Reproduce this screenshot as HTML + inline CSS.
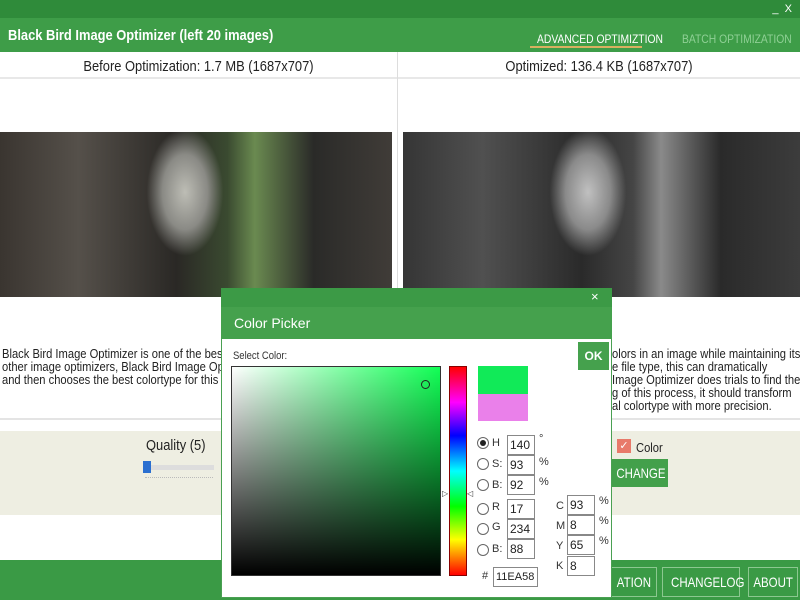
<!DOCTYPE html>
<html><head><meta charset="utf-8"><style>
*{margin:0;padding:0;box-sizing:border-box}
body{width:800px;height:600px;overflow:hidden;position:relative;background:#fff;font-family:"Liberation Sans",sans-serif}
.a{position:absolute;white-space:nowrap}
.s{transform:scaleX(.86);transform-origin:0 0}
.sc{transform:scaleX(.86);transform-origin:50% 0}
.t{font-size:13px;color:#222;line-height:13px}
.inp{position:absolute;border:1px solid #888;background:#fff;font-size:12px;padding-left:2px;height:20px;line-height:18px;color:#222}
.lbl{position:absolute;font-size:11px;color:#333}
.rad{position:absolute;width:12px;height:12px;border:1px solid #666;border-radius:50%;background:#fff}
.btn{position:absolute;border:1px solid #8cc890;color:#fff;font-size:14px;text-align:center;line-height:28px}
.btn span{display:inline-block;transform:scaleX(.82)}
</style></head><body>
<div class="a" style="left:0;top:0;width:800px;height:18px;background:#2f8b3a"></div>
<div class="a" style="right:8px;top:3px;color:#fff;font-size:11px">_&nbsp;&nbsp;X</div>
<div class="a" style="left:0;top:18px;width:800px;height:34px;background:#3e9d48"></div>
<div class="a s" style="left:8px;top:27px;color:#fff;font-size:15px;font-weight:bold">Black Bird Image Optimizer (left 20 images)</div>
<div class="a s" style="left:537px;top:32px;color:#fff;font-size:12px">ADVANCED OPTIMIZTION</div>
<div class="a" style="left:530px;top:46px;width:112px;height:2px;background:#d8b060"></div>
<div class="a s" style="left:682px;top:32px;color:#8fd095;font-size:12px">BATCH OPTIMIZATION</div>
<div class="a sc" style="left:0;top:58px;width:397px;text-align:center;font-size:15px;color:#222">Before Optimization: 1.7 MB (1687x707)</div>
<div class="a sc" style="left:398px;top:58px;width:402px;text-align:center;font-size:15px;color:#222">Optimized: 136.4 KB (1687x707)</div>
<div class="a" style="left:0;top:77px;width:800px;height:2px;background:#e8e8e8"></div>
<div class="a" style="left:397px;top:52px;width:1px;height:368px;background:#ddd"></div>
<div class="a" style="left:0;top:132px;width:392px;height:165px;background:radial-gradient(ellipse 45px 75px at 185px 60px,#bdbdb5,#8a8a85 50%,transparent 85%),linear-gradient(90deg,#3a3530 0%,#55504a 20%,#2a2825 45%,#3a4a30 58%,#6a8a50 65%,#2a2a28 80%,#403c38 100%)"></div>
<div class="a" style="left:403px;top:132px;width:397px;height:165px;background:radial-gradient(ellipse 45px 75px at 185px 60px,#c0c0c0,#8a8a8a 50%,transparent 85%),linear-gradient(90deg,#353535 0%,#505050 20%,#2a2a2a 45%,#454545 58%,#8a8a8a 65%,#2a2a2a 80%,#3c3c3c 100%)"></div>
<div class="a t s" style="left:2px;top:347px">Black Bird Image Optimizer is one of the best t<br>other image optimizers, Black Bird Image Opti<br>and then chooses the best colortype for this im</div>
<div class="a t s" style="left:612px;top:347px">olors in an image while maintaining its<br>e file type, this can dramatically<br>Image Optimizer does trials to find the<br>g of this process, it should transform<br>al colortype with more precision.</div>
<div class="a" style="left:0;top:418px;width:800px;height:2px;background:#e4e4e4"></div>
<div class="a" style="left:0;top:431px;width:800px;height:84px;background:#eeeee2"></div>
<div class="a s" style="left:146px;top:437px;font-size:15px;color:#222">Quality (5)</div>
<div class="a" style="left:150px;top:465px;width:64px;height:5px;background:#ddd"></div>
<div class="a" style="left:143px;top:461px;width:8px;height:12px;background:#2a6fd0"></div>
<div class="a" style="left:145px;top:477px;width:68px;border-top:1px dotted #bbb"></div>
<div class="a" style="left:617px;top:439px;width:14px;height:14px;background:#e87a6a;color:#fff;font-size:11px;line-height:14px;text-align:center">✓</div>
<div class="a s" style="left:636px;top:440px;font-size:13px;color:#222">Color</div>
<div class="a" style="left:611px;top:459px;width:57px;height:28px;background:#43a04b;color:#fff;font-size:14px;line-height:28px;text-align:center"><span style="display:inline-block;transform:scaleX(.82)">CHANGE</span></div>
<div class="a" style="left:0;top:560px;width:800px;height:40px;background:#3a9a45"></div>
<div class="btn" style="left:610px;top:567px;width:47px"><span>ATION</span></div>
<div class="btn" style="left:662px;top:567px;width:78px"><span>CHANGELOG</span></div>
<div class="btn" style="left:748px;top:567px;width:50px"><span>ABOUT</span></div>
<!-- dialog -->
<div class="a" style="left:221px;top:288px;width:391px;height:310px;background:#fff;border:1px solid #4aa052;border-top:none"></div>
<div class="a" style="left:221px;top:288px;width:391px;height:19px;background:#3c9a46"></div>
<div class="a" style="left:591px;top:289px;color:#fff;font-size:13px">×</div>
<div class="a" style="left:221px;top:307px;width:391px;height:32px;background:#45a14d"></div>
<div class="a" style="left:234px;top:315px;color:#fff;font-size:14px">Color Picker</div>
<div class="a" style="left:578px;top:342px;width:31px;height:28px;background:#45a14d;color:#fff;font-size:12px;text-align:center;line-height:28px;font-weight:bold">OK</div>
<div class="lbl s" style="left:233px;top:350px;font-size:11px">Select Color:</div>
<div class="a" style="left:231px;top:366px;width:210px;height:210px;border:1px solid #333;background:linear-gradient(to bottom,transparent,#000),linear-gradient(to right,#fff,#11ff55)"></div>
<div class="a" style="left:421px;top:380px;width:9px;height:9px;border:1px solid #222;border-radius:50%"></div>
<div class="a" style="left:449px;top:366px;width:18px;height:210px;border:1px solid #800;background:linear-gradient(to bottom,#f00,#f0f 17%,#00f 33%,#0ff 50%,#0f0 67%,#ff0 83%,#f00)"></div>
<div class="lbl" style="left:442px;top:489px;font-size:8px">▷</div><div class="lbl" style="left:467px;top:489px;font-size:8px">◁</div>
<div class="a" style="left:478px;top:366px;width:50px;height:28px;background:#11ea58"></div>
<div class="a" style="left:478px;top:394px;width:50px;height:27px;background:#ea80ea"></div>
<div class="rad" style="left:477px;top:437px"><div style="width:6px;height:6px;background:#222;border-radius:50%;margin:2px"></div></div>
<div class="rad" style="left:477px;top:458px"></div><div class="rad" style="left:477px;top:479px"></div>
<div class="rad" style="left:477px;top:503px"></div><div class="rad" style="left:477px;top:523px"></div><div class="rad" style="left:477px;top:544px"></div>
<div class="lbl" style="left:492px;top:437px">H</div><div class="lbl" style="left:492px;top:458px">S:</div><div class="lbl" style="left:492px;top:479px">B:</div>
<div class="lbl" style="left:492px;top:501px">R</div><div class="lbl" style="left:492px;top:521px">G</div><div class="lbl" style="left:492px;top:543px">B:</div>
<div class="inp" style="left:507px;top:435px;width:28px">140</div><div class="inp" style="left:507px;top:455px;width:28px">93</div><div class="inp" style="left:507px;top:475px;width:28px">92</div>
<div class="inp" style="left:507px;top:499px;width:28px">17</div><div class="inp" style="left:507px;top:519px;width:28px">234</div><div class="inp" style="left:507px;top:539px;width:28px">88</div>
<div class="lbl" style="left:539px;top:433px">°</div><div class="lbl" style="left:539px;top:456px">%</div><div class="lbl" style="left:539px;top:476px">%</div>
<div class="lbl" style="left:556px;top:500px">C</div><div class="lbl" style="left:556px;top:520px">M</div><div class="lbl" style="left:556px;top:540px">Y</div><div class="lbl" style="left:556px;top:560px">K</div>
<div class="inp" style="left:567px;top:495px;width:28px">93</div><div class="inp" style="left:567px;top:515px;width:28px">8</div><div class="inp" style="left:567px;top:535px;width:28px">65</div><div class="inp" style="left:567px;top:556px;width:28px">8</div>
<div class="lbl" style="left:599px;top:495px">%</div><div class="lbl" style="left:599px;top:515px">%</div><div class="lbl" style="left:599px;top:535px">%</div>
<div class="lbl" style="left:482px;top:570px">#</div>
<div class="inp" style="left:493px;top:567px;width:45px;font-size:11px">11EA58</div>
</body></html>
